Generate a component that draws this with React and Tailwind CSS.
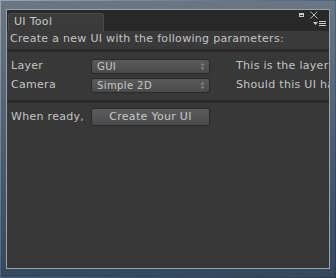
export default function App() {
  const font = { fontFamily: '"DejaVu Sans", Verdana, sans-serif' };
  const Arrows = () => (
    <svg width="5" height="9" viewBox="0 0 5 9" className="shrink-0">
      <path d="M2.5 1 L4.5 3.5 L0.5 3.5 Z" fill="#8a8a8a" />
      <path d="M2.5 8 L4.5 5.5 L0.5 5.5 Z" fill="#8a8a8a" />
    </svg>
  );
  const Popup = ({ label }) => (
    <div className="w-[119px] h-[15px] shrink-0 flex items-center justify-between pl-[5px] pr-[4px] rounded-[3px] border border-[#2a2a2a] bg-gradient-to-b from-[#5a5a5a] to-[#4a4a4a] text-[#c8c8c8] text-[10px] tracking-[0.4px] leading-none">
      <span>{label}</span>
      <Arrows />
    </div>
  );
  return (
    <div
      className="w-[336px] h-[278px] bg-gradient-to-br from-[#9aa4b0] via-[#4a6585] to-[#2a3a4c] p-[1px]"
      style={font}
    >
      <div className="w-full h-full bg-gradient-to-b from-[#6a7684] to-[#34485e] pt-[8px] pl-[5px] pr-[5px] pb-[8px]">
        <div className="w-full h-full border border-[#9aa3ad] flex flex-col overflow-hidden">
          {/* tab bar */}
          <div className="h-[21px] bg-[#282828] flex items-end relative shrink-0">
            <div className="ml-[1px] w-[96px] h-[18px] bg-[#3b3b3b] rounded-t-[3px] border border-b-0 border-[#4a4a4a] flex items-center pl-[5px] text-[11px] tracking-[0.3px] text-[#c8c8c8]">
              UI Tool
            </div>
            <div className="absolute right-[11px] top-[1px] flex items-center gap-[6px]">
              <div className="w-[5px] h-[4px] border border-[#c8c8c8] border-t-2" />
              <svg width="8" height="8" viewBox="0 0 8 8">
                <path d="M0.5 0.5 L7.5 7.5 M7.5 0.5 L0.5 7.5" stroke="#b8b8b8" strokeWidth="1" />
              </svg>
            </div>
            <div className="absolute right-[3px] top-[11px] flex items-center gap-[1px]">
              <svg width="5" height="3" viewBox="0 0 5 3">
                <path d="M0 0 L5 0 L2.5 3 Z" fill="#c8c8c8" />
              </svg>
              <div className="flex flex-col gap-[1px]">
                <div className="w-[7px] h-[1px] bg-[#c8c8c8]" />
                <div className="w-[7px] h-[1px] bg-[#c8c8c8]" />
                <div className="w-[7px] h-[1px] bg-[#c8c8c8]" />
              </div>
            </div>
          </div>
          {/* content */}
          <div className="flex-1 bg-[#383838] flex flex-col text-[11px] tracking-[0.3px] text-[#c4c4c4]">
            <div className="h-[16px] flex items-center pl-[3px] bg-[#3a3a3a] whitespace-nowrap">
              Create a new UI with the following parameters:
            </div>
            <div className="h-[3px] border-t border-[#1e1e1e] border-b border-[#2c2c2c] bg-[#262626] mt-[2px]" />
            <div className="flex flex-col gap-[4px] mt-[7px]">
              <div className="flex items-center h-[15px] whitespace-nowrap">
                <span className="w-[84px] shrink-0 pl-[4px]">Layer</span>
                <Popup label="GUI" />
                <span className="ml-[26px]">This is the layer</span>
              </div>
              <div className="flex items-center h-[15px] whitespace-nowrap">
                <span className="w-[84px] shrink-0 pl-[4px]">Camera</span>
                <Popup label="Simple 2D" />
                <span className="ml-[26px]">Should this UI have</span>
              </div>
            </div>
            <div className="h-[3px] border-t border-[#1e1e1e] border-b border-[#2c2c2c] bg-[#262626] mt-[7px]" />
            <div className="flex items-center mt-[5px] h-[18px] whitespace-nowrap">
              <span className="w-[84px] shrink-0 pl-[4px]">When ready,</span>
              <div className="w-[119px] h-[18px] shrink-0 flex items-center justify-center rounded-[3px] border border-[#2a2a2a] bg-gradient-to-b from-[#5c5c5c] to-[#4a4a4a] text-[#c8c8c8]">
                Create Your UI
              </div>
            </div>
          </div>
        </div>
      </div>
    </div>
  );
}
